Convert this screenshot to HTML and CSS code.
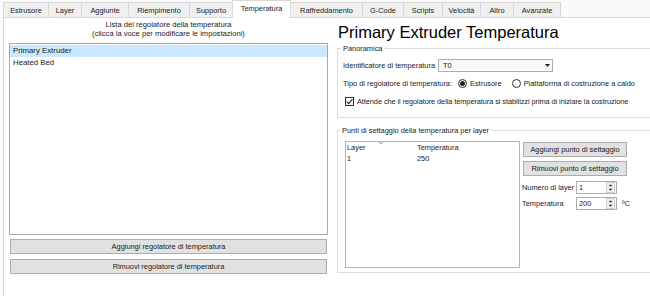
FILE: index.html
```html
<!DOCTYPE html>
<html lang="it">
<head>
<meta charset="utf-8">
<title>Temperatura</title>
<link rel="stylesheet" href="styles.css">
</head>
<body>
<div class="window">
  <div class="tabbar">
    <div class="tab">Estrusore</div>
    <div class="tab">Layer</div>
    <div class="tab">Aggiunte</div>
    <div class="tab">Riempimento</div>
    <div class="tab">Supporto</div>
    <div class="tab tab-active">Temperatura</div>
    <div class="tab">Raffreddamento</div>
    <div class="tab">G-Code</div>
    <div class="tab">Scripts</div>
    <div class="tab">Velocità</div>
    <div class="tab">Altro</div>
    <div class="tab">Avanzate</div>
  </div>
  <div class="pane">
    <div class="left">
      <div class="list-caption">Lista del regolatore della temperatura<br>(clicca la voce per modificare le impostazioni)</div>
      <div class="list">
        <div class="list-item selected">Primary Extruder</div>
        <div class="list-item">Heated Bed</div>
      </div>
      <button class="btn btn-wide">Aggiungi regolatore di temperatura</button>
      <button class="btn btn-wide btn-wide-2">Rimuovi regolatore di temperatura</button>
    </div>
    <div class="right">
      <h1 class="title">Primary Extruder Temperatura</h1>
      <fieldset class="group group-overview">
        <legend>Panoramica</legend>
        <div class="form-row">
          <span class="label-id">Identificatore di temperatura</span>
          <div class="combo">
            <span>T0</span>
            <svg class="combo-arrow" width="5" height="3" viewBox="0 0 5 3"><path d="M0 0H5L2.5 3Z" fill="#222"/></svg>
          </div>
        </div>
        <div class="form-row">
          <span class="label-type">Tipo di regolatore di temperatura:</span>
          <span class="radio checked"></span><span class="radio-text">Estrusore</span>
          <span class="radio"></span><span>Piattaforma di costruzione a caldo</span>
        </div>
        <div class="form-row">
          <span class="checkbox"><svg width="9" height="9" viewBox="0 0 9 9"><path d="M1.6 4.6L3.6 6.6L7.4 2.2" fill="none" stroke="#222" stroke-width="1.1"/></svg></span>
          <span class="check-text">Attende che il regolatore della temperatura si stabilizzi prima di iniziare la costruzione</span>
        </div>
      </fieldset>
      <fieldset class="group group-points">
        <legend>Punti di settaggio della temperatura per layer</legend>
        <div class="points">
          <div class="table">
            <svg class="sort" width="6" height="4" viewBox="0 0 6 4"><path d="M0.5 0.5L3 3L5.5 0.5" fill="none" stroke="#9a9a9a" stroke-width="1"/></svg>
            <div class="thead"><span class="col1">Layer</span><span class="col2">Temperatura</span></div>
            <div class="trow"><span class="col1">1</span><span class="col2">250</span></div>
          </div>
          <div class="side">
            <button class="btn side-btn">Aggiungi punto di settaggio</button>
            <button class="btn side-btn side-btn-2">Rimuovi punto di settaggio</button>
            <div class="spin-row">
              <span class="spin-label">Numero di layer</span>
              <div class="spin"><span>1</span>
                <svg class="spin-arrows" width="9" height="11" viewBox="0 0 9 11"><rect x="0.5" y="0.5" width="8" height="10" fill="#f3f3f3" stroke="#cfcfcf"/><path d="M2.5 4.2H6.5L4.5 2.2Z M2.5 6.8H6.5L4.5 8.8Z" fill="#333"/></svg>
              </div>
            </div>
            <div class="spin-row spin-row-2">
              <span class="spin-label">Temperatura</span>
              <div class="spin"><span>200</span>
                <svg class="spin-arrows" width="9" height="11" viewBox="0 0 9 11"><rect x="0.5" y="0.5" width="8" height="10" fill="#f3f3f3" stroke="#cfcfcf"/><path d="M2.5 4.2H6.5L4.5 2.2Z M2.5 6.8H6.5L4.5 8.8Z" fill="#333"/></svg>
              </div>
              <span class="unit">ºC</span>
            </div>
          </div>
        </div>
      </fieldset>
    </div>
  </div>
</div>
</body>
</html>
```

FILE: styles.css
```css
html, body {
  margin: 0;
  padding: 0;
}
body {
  width: 650px;
  height: 296px;
  overflow: hidden;
  background: #fafafa;
  font-family: "Liberation Sans", Arial, sans-serif;
  font-size: 7.4px;
  color: #1a1a1a;
}
.window {
  width: 650px;
  height: 296px;
  overflow: hidden;
}
.tabbar {
  display: flex;
  align-items: flex-end;
  height: 17px;
  padding-left: 3px;
  position: relative;
  z-index: 1;
}
.tab {
  box-sizing: border-box;
  height: 15px;
  border: 1px solid #d9d9d9;
  border-bottom: none;
  background: #f0f0f0;
  margin-right: -1px;
  display: flex;
  align-items: center;
  justify-content: center;
  white-space: nowrap;
  flex: none;
}
.tab:nth-child(1) { width: 46px; }
.tab:nth-child(2) { width: 34px; }
.tab:nth-child(3) { width: 48px; }
.tab:nth-child(4) { width: 62px; }
.tab:nth-child(5) { width: 44px; }
.tab:nth-child(6) { width: 59px; }
.tab:nth-child(7) { width: 73px; }
.tab:nth-child(8) { width: 42px; }
.tab:nth-child(9) { width: 40px; }
.tab:nth-child(10) { width: 39px; }
.tab:nth-child(11) { width: 34px; }
.tab:nth-child(12) { width: 48px; }
.tab-active {
  height: 18px;
  margin-bottom: -1px;
  background: #fff;
  position: relative;
  z-index: 2;
  padding-bottom: 2px;
}
.pane {
  display: flex;
  box-sizing: border-box;
  width: 647px;
  height: 279px;
  margin-left: 3px;
  border: 1px solid #d9d9d9;
  border-right: none;
  border-bottom: none;
  background: #fff;
}
.left {
  flex: none;
  width: 319px;
  margin-left: 5px;
  padding-top: 3px;
  display: flex;
  flex-direction: column;
}
.list-caption {
  text-align: center;
  line-height: 8.5px;
  font-size: 7.6px;
}
.list {
  margin-top: 5px;
  height: 192px;
  box-sizing: border-box;
  border: 1px solid #a9a9a9;
  padding-top: 1px;
}
.list-item {
  height: 12px;
  line-height: 12px;
  padding-left: 3px;
  font-size: 7.8px;
}
.list-item.selected {
  background: #cce8ff;
}
.btn {
  font: inherit;
  color: inherit;
  background: #e1e1e1;
  border: 1px solid #adadad;
  padding: 0;
  height: 15px;
  box-sizing: border-box;
  line-height: 13px;
  margin: 0;
  text-align: center;
  white-space: nowrap;
}
.btn-wide {
  width: 317px;
  margin: 4px 1px 0;
}
.btn-wide-2 {
  margin-top: 5px;
}
.right {
  flex: none;
  width: 313px;
  margin-left: 9px;
  padding-top: 4px;
}
.title {
  margin: 0;
  font-size: 16.5px;
  font-weight: normal;
  line-height: 20px;
  color: #000;
  padding-left: 1px;
}
.group {
  margin: 2px 0 0;
  padding: 5px 0 9px 5px;
  border: 1px solid #dcdcdc;
  border-right: none;
  min-width: 0;
}
.group legend {
  padding: 0 2px;
  margin-left: -2px;
  line-height: 9px;
}
.form-row {
  display: flex;
  align-items: center;
  height: 14px;
  white-space: nowrap;
}
.form-row + .form-row {
  margin-top: 4px;
}
.label-id {
  width: 95px;
  flex: none;
}
.combo {
  width: 115px;
  height: 13px;
  box-sizing: border-box;
  border: 1px solid #adadad;
  background: #f8f8f8;
  display: flex;
  align-items: center;
  justify-content: space-between;
  padding: 0 2px 0 4px;
}
.label-type {
  width: 115px;
  flex: none;
}
.radio {
  width: 9px;
  height: 9px;
  box-sizing: border-box;
  border: 1px solid #333;
  border-radius: 50%;
  margin-right: 3px;
  display: flex;
  align-items: center;
  justify-content: center;
  flex: none;
}
.radio.checked::after {
  content: "";
  width: 5px;
  height: 5px;
  border-radius: 50%;
  background: #222;
}
.radio-text {
  margin-right: 10px;
}
.checkbox {
  width: 9px;
  height: 9px;
  box-sizing: border-box;
  border: 1px solid #333;
  margin: 0 3px 0 2px;
  display: flex;
  flex: none;
}
.checkbox svg {
  margin: -1px;
}
.check-text {
  letter-spacing: -0.08px;
}
.group-points {
  margin-top: 8px;
  padding: 6px 0 4px 7px;
}
.group-points legend {
  margin-left: -5px;
}
.points {
  display: flex;
  align-items: flex-start;
}
.table {
  flex: none;
  width: 175px;
  height: 127px;
  box-sizing: border-box;
  border: 1px solid #b4b4b4;
  position: relative;
}
.sort {
  position: absolute;
  left: 32px;
  top: -1px;
}
.thead, .trow {
  display: flex;
  align-items: center;
}
.thead {
  height: 11px;
}
.trow {
  height: 10px;
}
.col1 {
  width: 71px;
  box-sizing: border-box;
  padding-left: 1px;
}
.side {
  flex: none;
  width: 110px;
  margin-left: 2px;
  display: flex;
  flex-direction: column;
  white-space: nowrap;
}
.side-btn {
  width: 104px;
  margin: 1px 0 0 1px;
}
.side-btn-2 {
  margin-top: 4px;
}
.spin-row {
  display: flex;
  align-items: center;
  height: 13px;
  margin-top: 5px;
}
.spin-row-2 {
  margin-top: 3px;
}
.spin-label {
  width: 54px;
  flex: none;
}
.spin {
  width: 41px;
  height: 13px;
  box-sizing: border-box;
  border: 1px solid #adadad;
  background: #fff;
  display: flex;
  align-items: center;
  justify-content: space-between;
  padding: 0 1px 0 2px;
}
.unit {
  margin-left: 5px;
}
```
